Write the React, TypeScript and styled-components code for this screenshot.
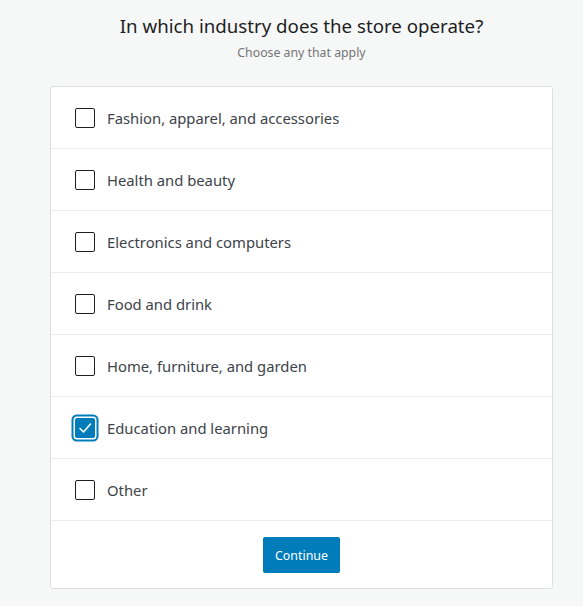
import React, { useState } from "react";
import styled, { createGlobalStyle } from "styled-components";

const Global = createGlobalStyle`
  html, body { margin: 0; padding: 0; background: #f6f7f7; overflow: hidden; }
  body { font-family: "Noto Sans", "Open Sans", sans-serif; }
  * { box-sizing: border-box; }
`;

const Page = styled.div`
  width: 603px;
  padding: 10px 50px 0;
  display: flex;
  flex-direction: column;
  align-items: stretch;
`;

const Title = styled.h2`
  margin: 0;
  text-align: center;
  font-size: 18.7px;
  font-weight: 400;
  line-height: 32px;
  color: #1e1e1e;
`;

const Subtitle = styled.p`
  margin: 1px 0 0;
  text-align: center;
  font-size: 12.3px;
  line-height: 20px;
  color: #757575;
`;

const Card = styled.div`
  margin-top: 23px;
  background: #fff;
  border: 1px solid #e0e0e0;
  border-radius: 3px;
`;

const Row = styled.label`
  height: 62px;
  display: flex;
  align-items: center;
  gap: 12px;
  padding: 0 0 0 24px;
  border-bottom: 1px solid #ececec;
  cursor: pointer;
`;

const Box = styled.span<{ $checked: boolean }>`
  width: 20px;
  height: 20px;
  flex: none;
  border-radius: 2px;
  display: flex;
  align-items: center;
  justify-content: center;
  border: ${(p) => (p.$checked ? "none" : "1.5px solid #1e1e1e")};
  background: ${(p) => (p.$checked ? "#007cba" : "#fff")};
  box-shadow: ${(p) => (p.$checked ? "0 0 0 1.5px #fff, 0 0 0 3.5px #007cba" : "none")};
`;

const Label = styled.span`
  font-size: 14.8px;
  color: #3c434a;
`;

const Footer = styled.div`
  display: flex;
  justify-content: center;
  padding: 16px 0 15px;
`;

const Button = styled.button`
  height: 36px;
  padding: 0 12px;
  border: none;
  border-radius: 2px;
  background: #007cba;
  color: #fff;
  font-family: inherit;
  font-size: 12.4px;
  cursor: pointer;
`;

const items = [
  "Fashion, apparel, and accessories",
  "Health and beauty",
  "Electronics and computers",
  "Food and drink",
  "Home, furniture, and garden",
  "Education and learning",
  "Other",
];

export default function App() {
  const [checked, setChecked] = useState<Record<number, boolean>>({ 5: true });
  return (
    <>
      <Global />
      <Page>
        <Title>In which industry does the store operate?</Title>
        <Subtitle>Choose any that apply</Subtitle>
        <Card>
          {items.map((t, i) => (
            <Row key={t} onClick={() => setChecked((c) => ({ ...c, [i]: !c[i] }))}>
              <Box $checked={!!checked[i]}>
                {checked[i] && (
                  <svg width="20" height="20" viewBox="0 0 20 20" fill="none">
                    <path d="M5 10.5l3.5 3.5L15.5 6" stroke="#fff" strokeWidth="1.6" strokeLinecap="round" strokeLinejoin="round" />
                  </svg>
                )}
              </Box>
              <Label>{t}</Label>
            </Row>
          ))}
          <Footer>
            <Button>Continue</Button>
          </Footer>
        </Card>
      </Page>
    </>
  );
}
